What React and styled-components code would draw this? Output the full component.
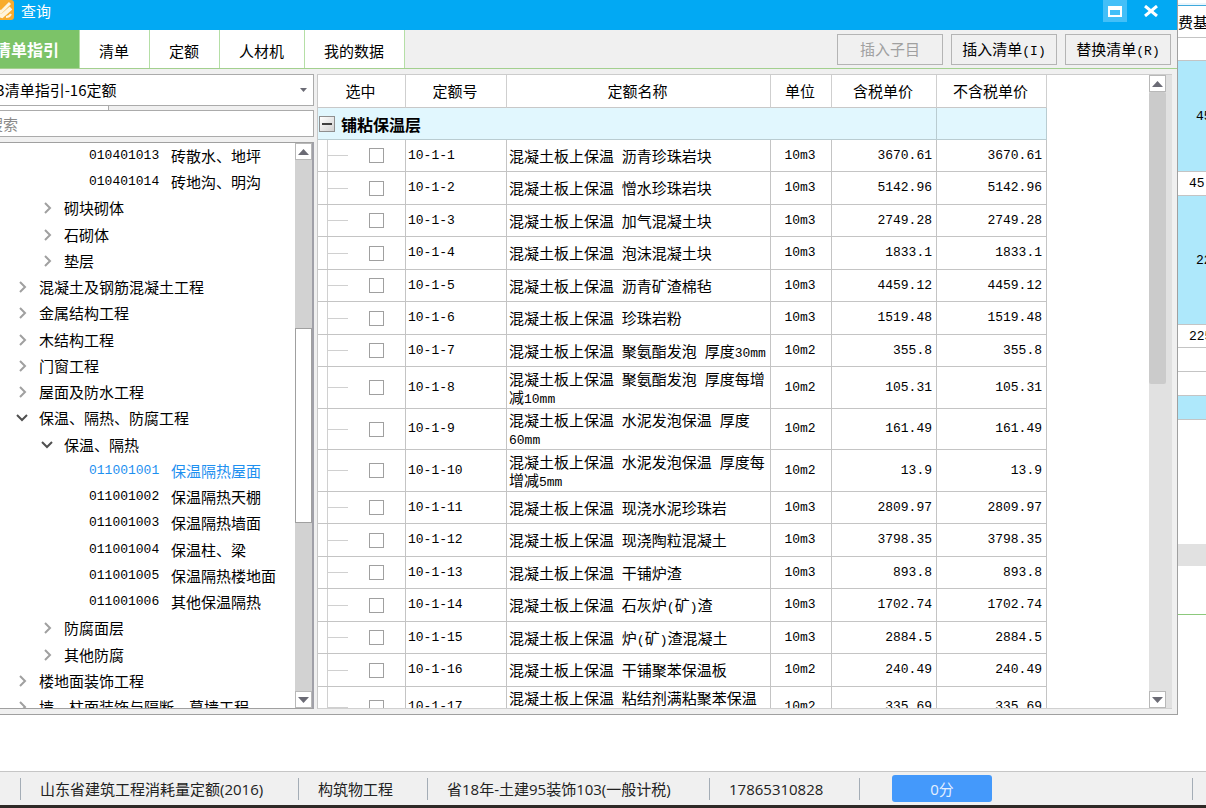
import React, { useState } from "react";
import styled, { createGlobalStyle, css } from "styled-components";

const GlobalStyle = createGlobalStyle`
  * {
    box-sizing: border-box;
  }
  body {
    margin: 0;
    background: #ffffff;
    color: #000000;
    font-family: "Noto Sans CJK SC", sans-serif;
    font-size: 15px;
    line-height: 18px;
    overflow: hidden;
  }
  button, input, select {
    font: inherit;
    color: inherit;
  }
`;

const Page = styled.div`
  display: flex;
  flex-direction: column;
  height: 100vh;
  overflow: hidden;
`;

const Desk = styled.div`
  display: flex;
  flex: 1;
  min-height: 0;
`;

// the window hangs a little over the left edge of the screen
const Dialog = styled.main`
  display: flex;
  flex-direction: column;
  flex: 1;
  min-width: 0;
  margin: 0 0 56px -24px;
  background: #f0f0f0;
  border-right: 1px solid #a0a0a0;
  border-bottom: 1px solid #a0a0a0;
`;

const TitleBar = styled.header`
  display: flex;
  align-items: flex-start;
  height: 30px;
  padding: 0 14px 0 18px;
  background: #02a9f3;
  color: #ffffff;
`;

const Title = styled.h1`
  flex: 1;
  margin: 0 0 0 7px;
  font-size: 15px;
  font-weight: 400;
  line-height: 22px;
`;

const WindowButton = styled.button`
  display: flex;
  align-items: center;
  justify-content: center;
  width: 24px;
  height: 22px;
  margin-left: 12px;
  padding: 0;
  border: none;
  background: ${({ $lit }) => ($lit ? "#43bff8" : "transparent")};
`;

const ToolBar = styled.div`
  display: flex;
  align-items: center;
  height: 39px;
  padding-right: 6px;
  border-bottom: 1px solid #a3d08f;
`;

const Tabs = styled.nav`
  display: flex;
  flex: 1;
  height: 38px;
`;

const Tab = styled.button`
  padding: 3px 20px 0 19px;
  border: none;
  border-right: 1px solid #b5dfa6;
  background: #ffffff;
  white-space: nowrap;

  ${({ $active }) =>
    $active &&
    css`
      padding-bottom: 3px;
      background: #7cc368;
      color: #ffffff;
      font-size: 16px;
      font-weight: 700;
    `}
`;

const ToolButton = styled.button`
  width: 106px;
  height: 31px;
  margin-left: 8px;
  padding: 0;
  border: 1px solid #b4b4b4;
  background: #f0f0f0;
  white-space: nowrap;

  &:disabled {
    color: #a0a0a0;
  }
`;

const Body = styled.div`
  display: flex;
  flex: 1;
  min-height: 0;
  gap: 3px;
  padding: 5px 5px 5px 6px;
`;

const Side = styled.section`
  display: flex;
  flex-direction: column;
  width: 332px;
`;

const SelectBox = styled.div`
  position: relative;
  display: flex;

  svg {
    position: absolute;
    right: 7px;
    top: 14px;
    pointer-events: none;
  }
`;

const Select = styled.select`
  width: 100%;
  height: 32px;
  padding: 0 5px;
  border: 1px solid #ababab;
  border-radius: 0;
  background: #ffffff;
  appearance: none;
`;

const Strip = styled.div`
  width: 127px;
  height: 4px;
  border-right: 1px solid #ababab;
  background: #ffffff;
`;

const Search = styled.input`
  width: 100%;
  height: 27px;
  margin-bottom: 5px;
  padding: 0 5px;
  border: 1px solid #ababab;
  background: #ffffff;

  &::placeholder {
    color: #8a8a8a;
    opacity: 1;
  }
`;

const TreeBox = styled.div`
  display: flex;
  flex: 1;
  min-height: 0;
  border: 1px solid #a0a0a0;
  border-right: 2px solid #a0a0a8;
  background: #ffffff;
`;

const Tree = styled.ul`
  flex: 1;
  margin: 0;
  padding: 0;
  list-style: none;
  overflow: hidden;
`;

const TreeRow = styled.li`
  display: flex;
  align-items: center;
  gap: 10px;
  height: 26px;
  padding-left: ${({ $level }) => 7 + $level * 25}px;
  color: ${({ $active }) => ($active ? "#1e90f0" : "inherit")};
  white-space: nowrap;

  &:nth-child(4n) {
    height: 27px;
  }
`;

const ArrowSlot = styled.span`
  display: flex;
  justify-content: center;
  width: 14px;
`;

const latinFont = css`
  font-family: "Liberation Mono", monospace;
  font-size: 13px;
`;

const Code = styled.span`
  width: 72px;
  ${latinFont}
`;

const Latin = styled.span`
  ${latinFont}
  line-height: 1px;
`;

const Track = styled.div`
  display: flex;
  flex-direction: column;
  width: ${({ $wide }) => ($wide ? 23 : 17)}px;
  background: ${({ $wide }) => ($wide ? "#e1e1e1" : "#d2d2d2")};
`;

const ScrollButton = styled.button`
  display: flex;
  align-items: center;
  justify-content: center;
  width: 17px;
  height: 17px;
  padding: 0;
  border: 1px solid #b8b8b8;
  background: #ffffff;
`;

const ThumbArea = styled.div`
  display: grid;
  flex: 1;
  grid-template-rows: ${({ $rows }) => $rows};
`;

const Thumb = styled.div`
  grid-row: 2;
  width: 17px;
  border: ${({ $solid }) => ($solid ? "none" : "1px solid #a0a0a0")};
  border-radius: ${({ $solid }) => ($solid ? 2 : 0)}px;
  background: ${({ $solid }) => ($solid ? "#cbcbcb" : "#ffffff")};
`;

const GridBox = styled.section`
  display: flex;
  flex: 1;
  min-width: 0;
  border-top: 1px solid #cccccc;
  border-left: 1px solid #c8c8c8;
  border-bottom: 1px solid #d0d0d0;
  background: #ffffff;
`;

const GridView = styled.div`
  flex: 1;
  min-width: 0;
  overflow: hidden;
`;

const Table = styled.table`
  width: 729px;
  table-layout: fixed;
  border-collapse: separate;
  border-spacing: 0;
`;

const HeadCell = styled.th`
  height: 33px;
  padding: 0 2px 0 0;
  border-right: 1px solid #cfcfcf;
  border-bottom: 1px solid #c8c8c8;
  font-weight: 400;
`;

const GroupCell = styled.td`
  height: 32px;
  padding: 0 0 0 1px;
  border-right: 1px solid #b9ccd1;
  border-bottom: 1px solid #b9ccd1;
  background: #e1f7fe;
`;

const GroupLabel = styled.div`
  display: flex;
  align-items: center;
  gap: 6px;
  font-size: 16px;
  font-weight: 700;
`;

const ToggleButton = styled.button`
  display: flex;
  align-items: center;
  justify-content: center;
  width: 16px;
  height: 16px;
  padding: 0;
  border: 1px solid #8f8f8f;
  background: linear-gradient(135deg, #ffffff, #d2d2d2);
`;

const Row = styled.tr`
  height: ${({ $tall }) => ($tall ? 41 : 32)}px;

  &:nth-child(odd) {
    height: ${({ $tall }) => ($tall ? 42 : 33)}px;
  }
`;

const Cell = styled.td`
  padding: 0 4px 0 2px;
  border-right: 1px solid #c4c4c4;
  border-bottom: 1px solid #c4c4c4;
`;

const CodeCell = styled(Cell)`
  ${latinFont}
  text-align: ${({ $align }) => $align || "left"};
`;

const CheckCell = styled(Cell)`
  padding: 0 0 0 30px;
  background:
    linear-gradient(#d0d0d0, #d0d0d0) 9px 0 / 1px 100% no-repeat,
    linear-gradient(#d0d0d0, #d0d0d0) 9px 50% / 21px 1px no-repeat;
`;

const Check = styled.input`
  display: block;
  width: 15px;
  height: 15px;
  margin: 0 auto;
  border: 1px solid #a0a0a0;
  background: #ffffff;
  appearance: none;

  &:checked {
    background: #02a9f3;
  }
`;

const Sheet = styled.aside`
  width: 28px;
  overflow: hidden;
  border-top: 3px solid #ffffff;
`;

const SheetCell = styled.div`
  height: ${({ $h }) => $h}px;
  padding-left: ${({ $pad }) => $pad || 0}px;
  border-bottom: 1px solid ${({ $line }) => $line || "#c4c4c4"};
  background: ${({ $bg }) => $bg || "#ffffff"};
  line-height: ${({ $h }) => $h}px;
  white-space: nowrap;
`;

const SheetNumber = styled(SheetCell)`
  ${latinFont}
`;

const StatusBar = styled.footer`
  display: flex;
  align-items: center;
  height: 37px;
  padding-left: 20px;
  border-top: 1px solid #c6c6c6;
  border-bottom: 3px solid #2e2926;
  background: #f0f0f0;
  color: #222222;
  font-family: "Open Sans", "Noto Sans CJK SC", sans-serif;
`;

const StatusItem = styled.span`
  width: ${({ $w }) => $w}px;
  height: 22px;
  padding-left: 19px;
  border-left: 1px solid #a4adb6;
  line-height: 22px;
  white-space: nowrap;
`;

const StatusAction = styled(StatusItem)`
  display: flex;
  flex: 1;
  align-items: center;
  padding-left: 32px;
`;

const StatusEnd = styled(StatusItem)`
  padding-left: 0;
`;

const ScoreButton = styled.button`
  width: 100px;
  height: 27px;
  padding: 0;
  border: none;
  border-radius: 3px;
  background: #4499fb;
  color: #e4f0ff;
`;

// latin runs are half the width of a chinese character
const Mixed = ({ text }) =>
  text
    .split(/([\x20-\x7e]+)/)
    .filter(Boolean)
    .map((part, i) => (/^[\x20-\x7e]/.test(part) ? <Latin key={i}>{part}</Latin> : part));

const Logo = () => (
  <svg width="20" height="20" viewBox="0 0 20 20">
    <rect width="20" height="20" rx="3" fill="#f8ab2c" />
    <path d="M3 9l4 3 9-9" fill="none" stroke="#fff4dc" strokeWidth="3" />
    <path d="M5 15l3 1 9-8" fill="none" stroke="#fff4dc" strokeWidth="4" />
    <path d="M12 17c3 0 4-1 5-3" fill="none" stroke="#fff4dc" strokeWidth="2" />
  </svg>
);

const Triangle = ({ down, small }) => (
  <svg width={small ? 7 : 11} height={small ? 4 : 6} viewBox="0 0 10 5" preserveAspectRatio="none">
    <path d={down ? "M0 0h10L5 5z" : "M0 5h10L5 0z"} fill="#6b6b75" />
  </svg>
);

const Arrow = ({ open }) =>
  open ? (
    <svg width="12" height="12" viewBox="0 0 12 12">
      <path d="M1 3l5 5 5-5" fill="none" stroke="#505050" strokeWidth="2" />
    </svg>
  ) : (
    <svg width="12" height="12" viewBox="0 0 12 12">
      <path d="M4 1l5 5-5 5" fill="none" stroke="#a0a0a0" strokeWidth="2" />
    </svg>
  );

const tabs = ["清单指引", "清单", "定额", "人材机", "我的数据"];

const tree = [
  { level: 3, code: "010401013", name: "砖散水、地坪" },
  { level: 3, code: "010401014", name: "砖地沟、明沟" },
  { level: 2, name: "砌块砌体" },
  { level: 2, name: "石砌体" },
  { level: 2, name: "垫层" },
  { level: 1, name: "混凝土及钢筋混凝土工程" },
  { level: 1, name: "金属结构工程" },
  { level: 1, name: "木结构工程" },
  { level: 1, name: "门窗工程" },
  { level: 1, name: "屋面及防水工程" },
  { level: 1, name: "保温、隔热、防腐工程", open: true },
  { level: 2, name: "保温、隔热", open: true },
  { level: 3, code: "011001001", name: "保温隔热屋面" },
  { level: 3, code: "011001002", name: "保温隔热天棚" },
  { level: 3, code: "011001003", name: "保温隔热墙面" },
  { level: 3, code: "011001004", name: "保温柱、梁" },
  { level: 3, code: "011001005", name: "保温隔热楼地面" },
  { level: 3, code: "011001006", name: "其他保温隔热" },
  { level: 2, name: "防腐面层" },
  { level: 2, name: "其他防腐" },
  { level: 1, name: "楼地面装饰工程" },
  { level: 1, name: "墙、柱面装饰与隔断、幕墙工程" },
];

const columns = [
  ["选中", 88],
  ["定额号", 101],
  ["定额名称", 264],
  ["单位", 61],
  ["含税单价", 105],
  ["不含税单价", 110],
];

const quotas = [
  ["10-1-1", "沥青珍珠岩块", "10m3", "3670.61"],
  ["10-1-2", "憎水珍珠岩块", "10m3", "5142.96"],
  ["10-1-3", "加气混凝土块", "10m3", "2749.28"],
  ["10-1-4", "泡沫混凝土块", "10m3", "1833.1"],
  ["10-1-5", "沥青矿渣棉毡", "10m3", "4459.12"],
  ["10-1-6", "珍珠岩粉", "10m3", "1519.48"],
  ["10-1-7", "聚氨酯发泡 厚度30mm", "10m2", "355.8"],
  ["10-1-8", "聚氨酯发泡 厚度每增减10mm", "10m2", "105.31", true],
  ["10-1-9", "水泥发泡保温 厚度60mm", "10m2", "161.49", true],
  ["10-1-10", "水泥发泡保温 厚度每增减5mm", "10m2", "13.9", true],
  ["10-1-11", "现浇水泥珍珠岩", "10m3", "2809.97"],
  ["10-1-12", "现浇陶粒混凝土", "10m3", "3798.35"],
  ["10-1-13", "干铺炉渣", "10m3", "893.8"],
  ["10-1-14", "石灰炉(矿)渣", "10m3", "1702.74"],
  ["10-1-15", "炉(矿)渣混凝土", "10m3", "2884.5"],
  ["10-1-16", "干铺聚苯保温板", "10m2", "240.49"],
  ["10-1-17", "粘结剂满粘聚苯保温板", "10m2", "335.69", true],
];

const ScrollBar = ({ wide, rows }) => (
  <Track $wide={wide}>
    <ScrollButton aria-label="向上滚动">
      <Triangle />
    </ScrollButton>
    <ThumbArea $rows={rows}>
      <Thumb $solid={wide} />
    </ThumbArea>
    <ScrollButton aria-label="向下滚动">
      <Triangle down />
    </ScrollButton>
  </Track>
);

const QuotaTable = () => (
  <Table>
    <colgroup>
      {columns.map(([label, width]) => (
        <col key={label} width={width} />
      ))}
    </colgroup>
    <thead>
      <tr>
        {columns.map(([label]) => (
          <HeadCell key={label}>{label}</HeadCell>
        ))}
      </tr>
    </thead>
    <tbody>
      <tr>
        <GroupCell colSpan={5}>
          <GroupLabel>
            <ToggleButton aria-label="折叠">
              <svg width="10" height="2">
                <rect width="10" height="2" fill="#404040" />
              </svg>
            </ToggleButton>
            铺粘保温层
          </GroupLabel>
        </GroupCell>
        <GroupCell />
      </tr>
      {quotas.map(([id, name, unit, price, tall]) => (
        <Row key={id} $tall={tall}>
          <CheckCell>
            <Check type="checkbox" aria-label={id} />
          </CheckCell>
          <CodeCell>{id}</CodeCell>
          <Cell><Mixed text={`混凝土板上保温 ${name}`} /></Cell>
          <CodeCell $align="center">{unit}</CodeCell>
          <CodeCell $align="right">{price}</CodeCell>
          <CodeCell $align="right">{price}</CodeCell>
        </Row>
      ))}
    </tbody>
  </Table>
);

const App = () => {
  const [tab, setTab] = useState("清单指引");
  const [current, setCurrent] = useState("011001001");

  return (
    <Page>
      <GlobalStyle />
      <Desk>
        <Dialog>
          <TitleBar>
            <Logo />
            <Title>查询</Title>
            <WindowButton $lit aria-label="最大化">
              <svg width="14" height="11" viewBox="0 0 14 11">
                <path d="M1 1h12v9H1zM1 3h12" fill="none" stroke="#ffffff" strokeWidth="2" />
              </svg>
            </WindowButton>
            <WindowButton aria-label="关闭">
              <svg width="14" height="12" viewBox="0 0 14 12">
                <path d="M1 1l12 10M13 1L1 11" stroke="#ffffff" strokeWidth="3" />
              </svg>
            </WindowButton>
          </TitleBar>

          <ToolBar>
            <Tabs>
              {tabs.map((name) => (
                <Tab key={name} $active={name === tab} onClick={() => setTab(name)}>
                  {name}
                </Tab>
              ))}
            </Tabs>
            <ToolButton disabled>插入子目</ToolButton>
            <ToolButton><Mixed text="插入清单(I)" /></ToolButton>
            <ToolButton><Mixed text="替换清单(R)" /></ToolButton>
          </ToolBar>

          <Body>
            <Side>
              <SelectBox>
                <Select aria-label="清单指引">
                  <option>13清单指引-16定额</option>
                </Select>
                <Triangle down small />
              </SelectBox>
              <Strip />
              <Search type="text" placeholder="搜索" aria-label="搜索" />
              <TreeBox>
                <Tree>
                  {tree.map((item) => (
                    <TreeRow
                      key={item.name}
                      $level={item.level}
                      $active={item.code === current}
                      onClick={() => item.code && setCurrent(item.code)}
                    >
                      <ArrowSlot>{!item.code && <Arrow open={item.open} />}</ArrowSlot>
                      {item.code && <Code>{item.code}</Code>}
                      <span>{item.name}</span>
                    </TreeRow>
                  ))}
                </Tree>
                <ScrollBar rows="168fr 196fr 168fr" />
              </TreeBox>
            </Side>

            <GridBox>
              <GridView>
                <QuotaTable />
              </GridView>
              <ScrollBar wide rows="0fr 292fr 306fr" />
            </GridBox>
          </Body>
        </Dialog>

        <Sheet>
          <SheetCell $h={3} $bg="#eaf6fd" $line="#3fa9dc" />
          <SheetCell $h={32}>费基数</SheetCell>
          <SheetCell $h={23} />
          <SheetNumber $h={111} $bg="#aee8fb" $pad={18}>45</SheetNumber>
          <SheetNumber $h={24} $pad={11}>45</SheetNumber>
          <SheetNumber $h={129} $bg="#aee8fb" $pad={18}>22</SheetNumber>
          <SheetNumber $h={23} $pad={11}>225</SheetNumber>
          <SheetCell $h={24} />
          <SheetCell $h={24} />
          <SheetCell $h={24} $bg="#aee8fb" />
          <SheetCell $h={124} $line="#ffffff" />
          <SheetCell $h={22} $bg="#e1e1e1" $line="#e1e1e1" />
          <SheetCell $h={49} $line="#8cc97c" />
        </Sheet>
      </Desk>

      <StatusBar>
        <StatusItem $w={278}>山东省建筑工程消耗量定额(2016)</StatusItem>
        <StatusItem $w={129}>构筑物工程</StatusItem>
        <StatusItem $w={282}>省18年-土建95装饰103(一般计税)</StatusItem>
        <StatusItem $w={150}>17865310828</StatusItem>
        <StatusAction>
          <ScoreButton>0分</ScoreButton>
        </StatusAction>
        <StatusEnd $w={14} />
      </StatusBar>
    </Page>
  );
};

export default App;
